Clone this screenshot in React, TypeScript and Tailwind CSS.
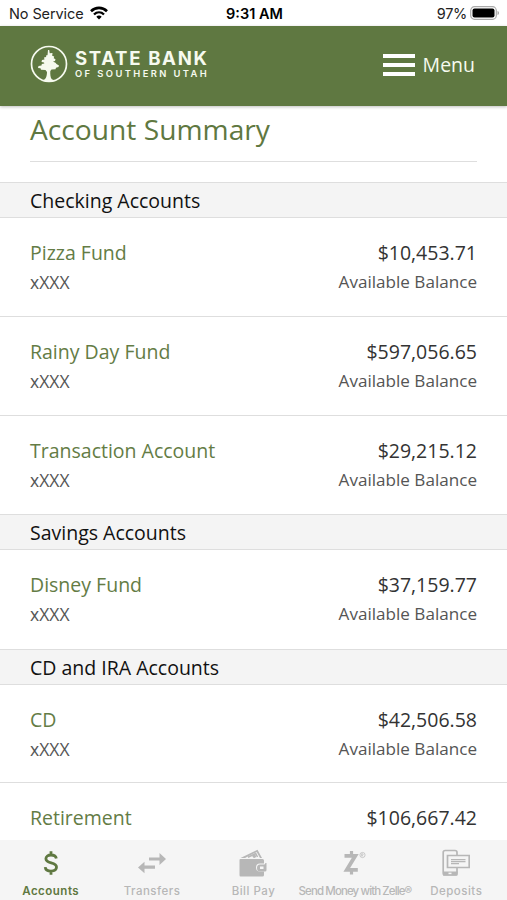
import type { ReactNode } from 'react';

interface Account {
  name: string;
  balance: string;
}

interface Group {
  title: string;
  accounts: Account[];
}

const groups: Group[] = [
  {
    title: 'Checking Accounts',
    accounts: [
      { name: 'Pizza Fund', balance: '$10,453.71' },
      { name: 'Rainy Day Fund', balance: '$597,056.65' },
      { name: 'Transaction Account', balance: '$29,215.12' },
    ],
  },
  {
    title: 'Savings Accounts',
    accounts: [{ name: 'Disney Fund', balance: '$37,159.77' }],
  },
  {
    title: 'CD and IRA Accounts',
    accounts: [
      { name: 'CD', balance: '$42,506.58' },
      { name: 'Retirement', balance: '$106,667.42' },
    ],
  },
];

function StatusBar() {
  return (
    <div className="grid h-[25.5px] shrink-0 grid-cols-3 items-center bg-white pr-[7px] pl-[9px] pt-[2px] font-['Inter',sans-serif] text-[14.5px] text-[#222]">
      <div className="flex items-center gap-[6px]">
        <span className="whitespace-nowrap tracking-[-0.1px]">No Service</span>
        <svg width="18" height="14" viewBox="0 0 18 14" fill="none" stroke="#000" className="-mt-px">
          <path d="M1 5.2C5.5.8 12.5.8 17 5.2" strokeWidth="2.6" />
          <path d="M4 8.5c2.9-2.8 7.1-2.8 10 0" strokeWidth="2.4" />
          <path d="M9 13.5 6.3 10.7c1.5-1.5 3.9-1.5 5.4 0z" fill="#000" stroke="none" />
        </svg>
      </div>
      <div className="text-center text-[14.5px] font-semibold text-black">9:31 AM</div>
      <div className="flex items-center justify-end gap-[3px]">
        <span className="tracking-[-0.3px]">97%</span>
        <svg width="30" height="14" viewBox="0 0 30 14" className="-mt-px">
          <rect x=".7" y=".7" width="25.6" height="12.6" rx="3.8" fill="#fff" stroke="#aaa" strokeWidth="1.2" />
          <rect x="2.5" y="2.4" width="22" height="9.2" rx="2" fill="#000" />
          <path d="M27.5 5c2 .5 2 3.5 0 4z" fill="#aaa" />
        </svg>
      </div>
    </div>
  );
}

function Logo() {
  return (
    <div className="flex items-center gap-[7px] text-[#f6faef]">
      <svg width="38" height="38" viewBox="0 0 38 38" fill="currentColor">
        <circle cx="19" cy="19" r="17.5" fill="none" stroke="currentColor" strokeWidth="1.7" />
        <path d="M18 5h1.200l.5 3.300 2.800-.3-.3 2.800 2 .7-.5 1.800 1.800 1-.5 1.700-2 .5 2.500 1.200 1 1.300 2.500 1.500-.5 1.500-2.500.7-.5 1.500-4 .3-1.200 1.500c-.2 3 0 6.500 1.500 8.300l4 1.700-6.800.9-6.800-.9c3.500-1.500 4.800-4.500 4.800-9l-1.500-2-4.500-.3-.5-1.500-2.500-.2.5-2 3-.5.3-1.500 2.500-.5-.3-1-2.500-.5.5-2 2.500-.5-.5-2 2-.5.5-2 1 .3z" />
      </svg>
      <div className="flex flex-col pt-px font-['Inter',sans-serif] whitespace-nowrap">
        <span className="text-[18.6px] leading-[20px] font-bold tracking-[1.65px]">STATE BANK</span>
        <span className="text-[9.4px] leading-[12px] font-semibold tracking-[2.4px]">OF SOUTHERN UTAH</span>
      </div>
    </div>
  );
}

function Header() {
  return (
    <header className="flex h-[80.5px] shrink-0 items-center justify-between bg-[#5f7841] pr-8 pl-[30px] pb-[4px] shadow-[0_1px_3px_rgba(0,0,0,0.25)]">
      <Logo />
      <button type="button" className="flex items-center gap-2 pt-[3px] text-[#f6faef]">
        <span className="flex flex-col gap-[5px]">
          <span className="h-[4px] w-8 bg-white" />
          <span className="h-[4px] w-8 bg-white" />
          <span className="h-[4px] w-8 bg-white" />
        </span>
        <span className="text-[19.5px] leading-6">Menu</span>
      </button>
    </header>
  );
}

function AccountRow({ name, balance }: Account) {
  return (
    <li className="flex h-[98.6px] justify-between border-b border-[#dedede] px-[30px] pt-[19px] last:border-b-0">
      <div>
        <div className="text-[19.5px] leading-[31px] text-[#647c45]">{name}</div>
        <div className="text-[17.5px] leading-[29px] text-[#555]">xXXX</div>
      </div>
      <div className="text-right">
        <div className="text-[19.5px] leading-[31px] text-[#333]">{balance}</div>
        <div className="text-[17.1px] leading-[28px] text-[#555]">Available Balance</div>
      </div>
    </li>
  );
}

function Tab({ label, active, tight, children }: { label: string; active?: boolean; tight?: boolean; children: ReactNode }) {
  return (
    <button
      type="button"
      className={`flex w-1/5 min-w-0 flex-col items-center pt-[8px] ${active ? 'text-[#5f7841]' : 'text-[#b7b7b7]'}`}
    >
      <span className="flex h-[30px] items-center justify-center">{children}</span>
      <span
        className={`mt-[5px] text-[11.5px] leading-[16px] whitespace-nowrap ${active ? 'font-semibold' : 'font-medium'} ${tight ? 'tracking-[-0.9px]' : 'tracking-[0.5px]'}`}
      >
        {label}
      </span>
    </button>
  );
}

function TabBar() {
  return (
    <nav className="flex h-[60px] shrink-0 bg-[#f5f5f5] font-['Inter',sans-serif]">
      <Tab label="Accounts" active>
        <svg width="16" height="26" viewBox="0 0 16 26" fill="none" stroke="currentColor" strokeWidth="2.8">
          <path d="M13.3 8.5C13 6.3 11 5 8 5 5 5 2.9 6.5 2.9 8.8c0 5.6 10.6 2.6 10.6 8.3 0 2.5-2.2 4-5.5 4-3.4 0-5.5-1.5-5.8-4M8 1.2V5M8 21v3.8" />
        </svg>
      </Tab>
      <Tab label="Transfers">
        <svg width="28" height="22" viewBox="0 0 28 22" fill="currentColor">
          <path d="M11 5.5h10.500V1L28 7l-6.500 6V8.500H11zM17 13.500H6.500V9.800L0 15.500l6.500 5.700v-4.500H17z" />
        </svg>
      </Tab>
      <Tab label="Bill Pay">
        <svg width="28" height="28" viewBox="0 0 28 28" fill="currentColor">
          <path d="M1.500 9 18.500.8 23 9h-2L17.700 3 6 9z" />
          <path d="m9 8.200 7.700-3.700L18.500 8" fill="none" stroke="currentColor" strokeWidth="1.6" />
          <circle cx="15.3" cy="7.2" r="1.7" />
          <path d="M1.500 10h22q1.500 0 1.500 1.500v3h-4q-4 0-4 4t4 4h4V26q0 1.500-1.500 1.500h-22Q.5 27.500.5 26V11q0-1 1-1z" />
          <path d="M21 15.500h4.500l1-1.500h1v7q0 1.500-1.500 1.500h-5q-3 0-3-3.500t3-3.500z" />
          <path d="M21 17.500h3.500V20H21z" fill="#f5f5f5" />
        </svg>
      </Tab>
      <Tab label="Send Money with Zelle®" tight>
        <svg width="30" height="26" viewBox="0 0 30 26" fill="none" stroke="currentColor" strokeWidth="3.8">
          <path d="M4.500 5.800h10.800L6.800 19.800h11" />
          <path d="M11.500 1v5M11.500 20v4.500" strokeWidth="3.2" />
          <circle cx="22.5" cy="5" r="2.6" strokeWidth=".7" />
          <path d="M21.700 6.500V3.700h1q1 .7 0 1.400h-1l1.500 1.400" strokeWidth=".6" />
        </svg>
      </Tab>
      <Tab label="Deposits">
        <svg width="28" height="28" viewBox="0 0 28 28" fill="none" stroke="currentColor" strokeWidth="1.7">
          <path d="M15 6V3.500q0-2-2-2H3.200q-2 0-2 2V24q0 2 2 2H13q2 0 2-2v-5.500" />
          <path d="M1 22.500h14.500v4H1z" fill="currentColor" stroke="none" />
          <path d="M6.500 24.400h3" stroke="#f5f5f5" strokeWidth="1.5" />
          <path d="M5.500 6.500h21.700v12H5.500z" />
          <path d="M9 10.600h14.500M9 12.700h14.500M9 14.600h8" strokeWidth="1.2" />
        </svg>
      </Tab>
    </nav>
  );
}

export default function App() {
  return (
    <div className="flex h-[900px] w-[507px] flex-col overflow-hidden bg-white font-['Open_Sans','Noto_Sans',sans-serif]">
      <StatusBar />
      <Header />
      <main className="min-h-0 flex-1 overflow-hidden">
        <div className="mx-[30px] h-14 border-b border-[#dedede]">
          <h1 className="pt-[4px] text-[28.2px] leading-[38px] text-[#5f7841]">Account Summary</h1>
        </div>
        <div className="pt-[20.4px]">
          {groups.map((group) => (
            <section key={group.title}>
              <h2 className="h-9 border-y border-[#dedede] bg-[#f4f4f4] px-[30px] text-[19.5px] leading-[35px] text-[#111]">
                {group.title}
              </h2>
              <ul>
                {group.accounts.map((account) => (
                  <AccountRow key={account.name} {...account} />
                ))}
              </ul>
            </section>
          ))}
        </div>
      </main>
      <TabBar />
    </div>
  );
}
